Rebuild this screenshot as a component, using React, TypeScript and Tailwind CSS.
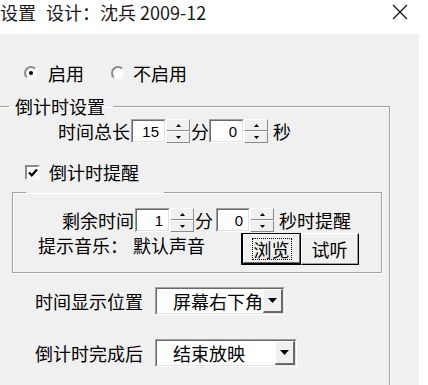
import React from 'react';

const FONT = '"Noto Sans CJK SC", "Noto Sans", sans-serif';

function Sunken({ className = '', children }: { className?: string; children?: React.ReactNode }) {
  return (
    <div
      className={`border-t border-l border-t-[#a0a0a0] border-l-[#a0a0a0] border-b border-r border-b-white border-r-white ${className}`}
    >
      <div className="h-full w-full border-t border-l border-t-[#696969] border-l-[#696969] border-b border-r border-b-[#e3e3e3] border-r-[#e3e3e3] bg-white">
        {children}
      </div>
    </div>
  );
}

function Tri({ up }: { up?: boolean }) {
  return (
    <svg width="5" height="3" viewBox="0 0 5 3" className="block">
      {up ? <path d="M2.5 0 L5 3 L0 3 Z" fill="#000" /> : <path d="M0 0 L5 0 L2.5 3 Z" fill="#000" />}
    </svg>
  );
}

function Spin() {
  return (
    <div className="flex h-[24px] w-[24px] flex-col">
      {[true, false].map((up) => (
        <div
          key={String(up)}
          className="flex flex-1 items-center justify-center border border-t-white border-l-white border-b-[#8a8a8a] border-r-[#8a8a8a] bg-[#f0f0f0]"
        >
          <Tri up={up} />
        </div>
      ))}
    </div>
  );
}

function NumBox({ value, w = 'w-[35px]' }: { value: string; w?: string }) {
  return (
    <Sunken className={`h-[24px] ${w}`}>
      <div className="flex h-full items-center justify-end pr-[5px] font-['Liberation_Sans'] text-[15px] leading-none">
        {value}
      </div>
    </Sunken>
  );
}

function Combo({ text, w }: { text: string; w: string }) {
  return (
    <Sunken className={`h-[28px] ${w}`}>
      <div className="flex h-full items-stretch">
        <div className="min-w-0 flex-1 overflow-hidden whitespace-nowrap pl-[16px] leading-[24px]">{text}</div>
        <div className="flex w-[20px] items-center justify-center border-t border-l border-t-white border-l-white border-b-2 border-r-2 border-b-[#696969] border-r-[#696969] bg-[#f0f0f0]">
          <svg width="9" height="5" viewBox="0 0 9 5">
            <path d="M0 0 L9 0 L4.5 5 Z" fill="#000" />
          </svg>
        </div>
      </div>
    </Sunken>
  );
}

export default function App() {
  return (
    <div className="h-[385px] w-[428px] overflow-hidden bg-white text-[#000]" style={{ fontFamily: FONT }}>
      <div className="flex h-[34px] items-start justify-between">
        <div className="flex pt-[1px] text-[18px] leading-[22px] text-[#1a1a1a]">
          <span>设置</span>
          <span className="ml-[10px]">设计：沈兵 2009-12</span>
        </div>
        <svg width="16" height="16" viewBox="0 0 16 16" className="mr-[20px] mt-[4px]">
          <path d="M1 1 L15 15 M15 1 L1 15" stroke="#111" strokeWidth="1.3" />
        </svg>
      </div>

      <div className="h-[351px] w-[419px] overflow-hidden bg-[#f0f0f0] text-[18px] leading-[22px]">
        {/* 启用 / 不启用 */}
        <div className="mt-[28px] flex h-[22px] items-center pl-[24px]">
          <span className="flex h-[14px] w-[14px] items-center justify-center rounded-full border-2 border-t-[#8a8a8a] border-l-[#8a8a8a] border-b-[#f8f8f8] border-r-[#f8f8f8] bg-white">
            <span className="h-[4px] w-[4px] rounded-full bg-black" />
          </span>
          <span className="ml-[10px]">启用</span>
          <span className="ml-[27px] h-[14px] w-[14px] rounded-full border-2 border-t-[#8a8a8a] border-l-[#8a8a8a] border-b-[#f8f8f8] border-r-[#f8f8f8] bg-white" />
          <span className="ml-[8px]">不启用</span>
        </div>

        <fieldset className="ml-[-2px] mt-[11px] w-[392px] border border-[#a0a0a0] pb-[40px] shadow-[1px_1px_0_#fff,inset_1px_1px_0_#fff]">
          <legend className="ml-[10px] pl-[6px] pr-[8px]">倒计时设置</legend>

          {/* 时间总长 */}
          <div className="mt-[2px] flex h-[24px] items-center pl-[59px]">
            <span className="w-[73px]">时间总长</span>
            <NumBox value="15" />
            <Spin />
            <span className="ml-[1px] w-[18px]">分</span>
            <NumBox value="0" />
            <Spin />
            <span className="ml-[5px]">秒</span>
          </div>

          {/* 倒计时提醒 */}
          <div className="mt-[18px] flex h-[22px] items-center pl-[26px]">
            <span className="flex h-[15px] w-[15px] items-center justify-center border-2 border-t-[#8a8a8a] border-l-[#8a8a8a] border-b-[#f8f8f8] border-r-[#f8f8f8] bg-white">
              <svg width="10" height="9" viewBox="0 0 10 9">
                <path d="M1 4.5 L3.8 7.3 L9 1.5" stroke="#000" strokeWidth="2.2" fill="none" />
              </svg>
            </span>
            <span className="ml-[9px]">倒计时提醒</span>
          </div>

          <fieldset className="ml-[13px] mt-[9px] w-[370px] border border-[#a0a0a0] pb-[7px] shadow-[1px_1px_0_#fff,inset_1px_1px_0_#fff]">
            <legend className="ml-[13px] h-[1px] w-[138px]" />

            {/* 剩余时间 */}
            <div className="mt-[15px] flex h-[24px] items-center pl-[49px]">
              <span className="w-[73px]">剩余时间</span>
              <NumBox value="1" />
              <Spin />
              <span className="ml-[1px] w-[21px]">分</span>
              <NumBox value="0" w="w-[34px]" />
              <Spin />
              <span className="ml-[5px]">秒时提醒</span>
            </div>

            {/* 提示音乐 */}
            <div className="mt-[1px] flex h-[32px] items-start pl-[25px]">
              <span className="mt-[1px]">提示音乐：</span>
              <span className="ml-[5px] mt-[1px]">默认声音</span>
              <button
                type="button"
                className="ml-[36px] h-[32px] w-[60px] border border-l-2 border-b-2 border-black bg-[#f0f0f0] p-0"
              >
                <div className="flex h-full w-full items-center justify-center border border-t-white border-l-white border-b-[#696969] border-r-[#696969]">
                  <span className="border border-dotted border-black px-[1px] leading-[20px]">浏览</span>
                </div>
              </button>
              <button
                type="button"
                className="h-[32px] w-[58px] border border-t-white border-l-white border-b-black border-r-black bg-[#f0f0f0] p-0"
              >
                <div className="flex h-full w-full items-center justify-center border-b border-r border-b-[#a0a0a0] border-r-[#a0a0a0] leading-[20px]">
                  试听
                </div>
              </button>
            </div>
          </fieldset>

          {/* 时间显示位置 */}
          <div className="mt-[14px] flex h-[28px] items-center pl-[36px]">
            <span className="w-[120px]">时间显示位置</span>
            <Combo text="屏幕右下角" w="w-[130px]" />
          </div>

          {/* 倒计时完成后 */}
          <div className="mt-[24px] flex h-[28px] items-center pl-[36px]">
            <span className="w-[120px]">倒计时完成后</span>
            <Combo text="结束放映" w="w-[142px]" />
          </div>
        </fieldset>
      </div>
    </div>
  );
}
